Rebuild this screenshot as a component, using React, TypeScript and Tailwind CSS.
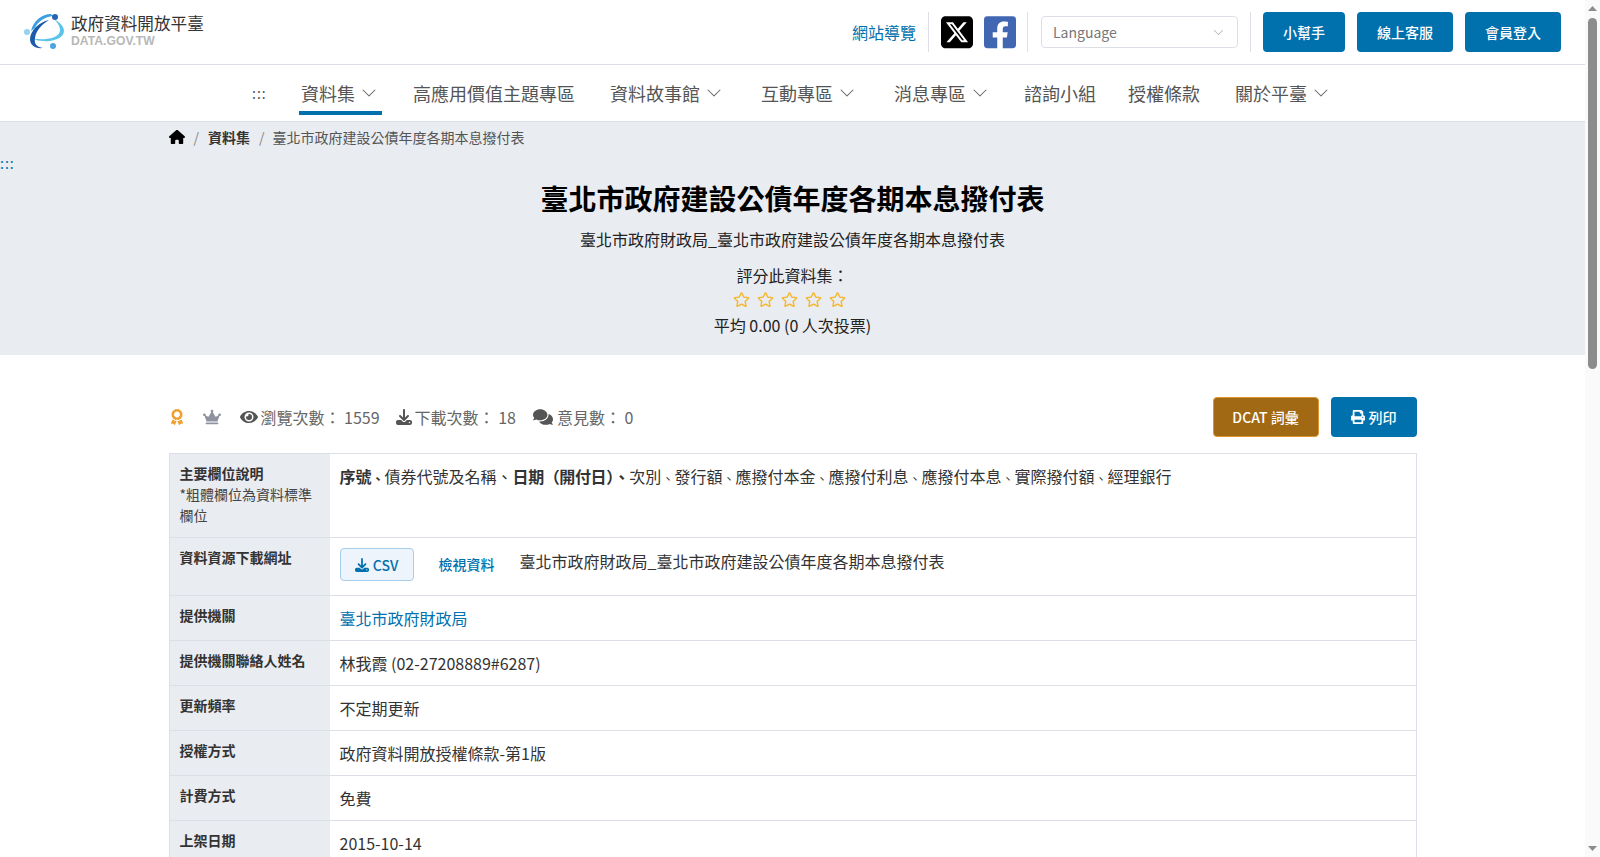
import { BsChevronDown } from 'react-icons/bs';
import { FaAward, FaComments, FaCrown, FaEye, FaFacebookSquare, FaPrint, FaRegStar } from 'react-icons/fa';
import { FaDownload, FaHouse, FaSquareXTwitter } from 'react-icons/fa6';

const NAV_ITEMS = [
  { label: '資料集', chevron: true, active: true, gap: 'ml-[35px]' },
  { label: '高應用價值主題專區', gap: 'ml-[34px]' },
  { label: '資料故事館', chevron: true, gap: 'ml-[35px]' },
  { label: '互動專區', chevron: true, gap: 'ml-[37px]' },
  { label: '消息專區', chevron: true, gap: 'ml-[37px]' },
  { label: '諮詢小組', gap: 'ml-[34px]' },
  { label: '授權條款', gap: 'ml-[32px]' },
  { label: '關於平臺', chevron: true, gap: 'ml-[35px]' },
];

const SIMPLE_ROWS = [
  { label: '提供機關聯絡人姓名', value: '林我霞 (02-27208889#6287)' },
  { label: '更新頻率', value: '不定期更新' },
  { label: '授權方式', value: '政府資料開放授權條款-第1版' },
  { label: '計費方式', value: '免費' },
  { label: '上架日期', value: '2015-10-14' },
];

const PLAIN_FIELDS = ['次別', '發行額', '應撥付本金', '應撥付利息', '應撥付本息', '實際撥付額'];

function Logo() {
  return (
    <svg viewBox="0 0 42 38" className="w-[42px] h-[38px] shrink-0">
      <path d="M8 18C10 8 19 1 28 1l2 2C22 4 15 8 12 15Z" fill="#3b9fe0" />
      <path d="M26 7C16 9 7 18 7 26c0 6 5 10 13 9-6-1-9-4-8-9 0-7 6-14 14-19Z" fill="#1c5bab" />
      <path d="M31 6c7 4 10 8 10 12 0 7-11 11-21 10-4 0-7-1-9-2 4 0 8 .5 12 0 9-1 14-4 14-9 0-4-3-8-6-11Z" fill="#5cc3ea" />
      <circle cx="32" cy="4" r="3" fill="#2a63b4" />
      <circle cx="4" cy="19" r="3" fill="#8fd3f0" />
      <circle cx="30" cy="33" r="3" fill="#4aa5e0" />
    </svg>
  );
}

function Divider() {
  return <span className="block w-px h-[40px] bg-[#dcdfe6] shrink-0" />;
}

function BlueButton({ label }: { label: string }) {
  return (
    <button type="button" className="h-10 px-5 rounded bg-[#0071ad] text-white text-sm font-medium">
      {label}
    </button>
  );
}

// the source page renders its enumeration mark tighter than a full em
function Mark() {
  return <span className="text-[13px]">、</span>;
}

function Row({ label, children }: { label: React.ReactNode; children: React.ReactNode }) {
  return (
    <div className="flex border-b border-[#dcdfe6]">
      <div className="w-[160px] shrink-0 bg-[#e9ecf0] px-[10px] pt-[9px] pb-[11px] text-sm leading-[21px] text-[#333]">{label}</div>
      <div className="flex-1 px-[10px] py-[10px] text-base leading-6 text-[#333] min-w-0">{children}</div>
    </div>
  );
}

function Scrollbar() {
  return (
    <div className="w-[15px] shrink-0 bg-[#fafafa] flex flex-col items-center">
      <svg viewBox="0 0 9 5" className="w-[9px] h-[5px] mt-[6px] shrink-0">
        <path d="M4.5 0 9 5H0Z" fill="#8c8c8c" />
      </svg>
      <div className="w-[9px] h-[351px] mt-[7px] rounded-full bg-[#8c8c8c]" />
      <svg viewBox="0 0 9 5" className="w-[9px] h-[5px] mt-auto mb-[6px] shrink-0">
        <path d="M0 0H9L4.5 5Z" fill="#8c8c8c" />
      </svg>
    </div>
  );
}

export default function App() {
  return (
    <div className="h-screen flex overflow-hidden bg-white text-[#222] [font-family:'Noto_Sans_CJK_TC','Noto_Sans',sans-serif]">
      <div className="flex-1 min-w-0">
        <header className="h-[65px] border-b border-[#dcdfe6] flex items-center justify-between pl-[23px] pr-[24px]">
          <div className="flex items-center gap-[6px]">
            <Logo />
            <div className="flex flex-col -mt-[4px]">
              <span className="text-[16.6px] leading-[23px] text-[#333]">政府資料開放平臺</span>
              <span className="text-[12.2px] leading-[13px] font-bold text-[#b8b8b8] [font-family:'Liberation_Sans',sans-serif]">DATA.GOV.TW</span>
            </div>
          </div>
          <div className="flex items-center">
            <a className="text-base text-[#0071ad] mr-[12px]">網站導覽</a>
            <Divider />
            <FaSquareXTwitter className="w-[32px] h-[36.6px] ml-[12px] text-black" />
            <FaFacebookSquare className="w-[32px] h-[36.6px] ml-[11px] text-[#4267b2]" />
            <span className="ml-[11px]"><Divider /></span>
            <div className="ml-[13px] w-[197px] h-[32px] rounded border border-[#dcdfe6] flex items-center justify-between pl-[11px] pr-[13px] text-sm text-[#777]">
              Language
              <BsChevronDown className="w-[11px] h-[11px] text-[#aaa]" />
            </div>
            <span className="ml-[12px]"><Divider /></span>
            <div className="ml-[12px] flex gap-3">
              <BlueButton label="小幫手" />
              <BlueButton label="線上客服" />
              <BlueButton label="會員登入" />
            </div>
          </div>
        </header>

        <nav className="h-[57px] pr-[2px] flex items-center justify-center text-lg text-[#555] border-b border-[#dcdfe6]">
          <span className="w-[14px] text-sm tracking-[1px]">:::</span>
          {NAV_ITEMS.map((item) => (
            <div key={item.label} className={`relative flex items-center gap-[6px] ${item.gap}`}>
              {item.label}
              {item.chevron && <BsChevronDown className="w-4 h-4 mr-[2px] text-[#666]" />}
              {item.active && <span className="absolute left-[-2px] right-[-3px] top-[32px] h-1 bg-[#0071ad]" />}
            </div>
          ))}
        </nav>

        <section className="h-[233px] bg-[#e9ecf0]">
          <div className="max-w-[1248px] mx-auto flex items-center h-[29px] text-sm text-[#555]">
            <FaHouse className="w-4 h-4 text-black" />
            <span className="ml-[9px] mr-[9px] text-[#888]">/</span>
            <span className="font-bold text-[#333]">資料集</span>
            <span className="ml-[9px] mr-[8px] text-[#888]">/</span>
            臺北市政府建設公債年度各期本息撥付表
          </div>
          <div className="mt-[3px] text-sm leading-[18px] tracking-[1px] text-[#0071ad]">:::</div>
          <div className="flex flex-col items-center">
            <h1 className="mt-[5px] text-[28px] leading-[42px] font-bold text-black">臺北市政府建設公債年度各期本息撥付表</h1>
            <p className="mt-[8px] text-base leading-6 text-[#222]">臺北市政府財政局_臺北市政府建設公債年度各期本息撥付表</p>
            <p className="mt-[12px] text-base leading-6 text-[#222]">評分此資料集：</p>
            <div className="flex gap-[7px] h-[24px] items-center pr-[7px]">
              {[0, 1, 2, 3, 4].map((i) => (
                <FaRegStar key={i} className="w-[17px] h-[17px] text-[#f4b92f]" />
              ))}
            </div>
            <p className="mt-[2px] text-base leading-6 text-[#222]">平均 0.00 (0 人次投票)</p>
          </div>
        </section>

        <main className="max-w-[1248px] mx-auto">
          <div className="mt-[42px] h-[40px] flex items-center justify-between text-base text-[#666]">
            <div className="flex items-center">
              <FaAward className="w-4 h-4 text-[#f0a030]" />
              <FaCrown className="w-[18px] h-[18px] ml-[18px] text-[#8f93a0]" />
              <FaEye className="w-[18px] h-[18px] ml-[19px] text-[#555]" />
              <span className="ml-[3px]">瀏覽次數： 1559</span>
              <FaDownload className="w-4 h-4 ml-[16px] text-[#555]" />
              <span className="ml-[3px]">下載次數： 18</span>
              <FaComments className="w-5 h-5 ml-[17px] text-[#555]" />
              <span className="ml-[4px]">意見數： 0</span>
            </div>
            <div className="flex gap-3">
              <button type="button" className="h-10 w-[106px] rounded border border-[#e0962f] bg-[#a16913] text-white text-sm font-medium">DCAT 詞彙</button>
              <button type="button" className="h-10 w-[86px] rounded bg-[#0071ad] text-white text-sm font-medium flex items-center justify-center gap-1">
                <FaPrint className="w-[14px] h-[14px]" />
                列印
              </button>
            </div>
          </div>

          <div className="mt-4 border border-b-0 border-[#dcdfe6]">
            <Row
              label={
                <>
                  <b className="font-bold">主要欄位說明</b>
                  <br />
                  <span className="text-[#444]">*粗體欄位為資料標準欄位</span>
                </>
              }
            >
              <b className="font-bold">序號<Mark /></b>債券代號及名稱、<b className="font-bold tracking-[-0.4px]">日期（開付日）、</b>
              {PLAIN_FIELDS.map((field) => (
                <span key={field}>{field}<Mark /></span>
              ))}
              經理銀行
            </Row>
            <Row label={<b className="font-bold">資料資源下載網址</b>}>
              <div className="flex items-start h-[37px]">
                <button type="button" className="h-[33px] w-[74px] rounded border border-[#a6cdea] bg-[#edf4fc] text-sm font-medium text-[#0071ad] flex items-center justify-center gap-1">
                  <FaDownload className="w-[14px] h-[14px]" />
                  CSV
                </button>
                <a className="ml-[25px] mt-[6px] text-sm leading-[21px] text-[#0071ad] font-medium">檢視資料</a>
                <span className="ml-[25px] mt-[1px]">臺北市政府財政局_臺北市政府建設公債年度各期本息撥付表</span>
              </div>
            </Row>
            <Row label={<b className="font-bold">提供機關</b>}>
              <a className="text-[#0071ad]">臺北市政府財政局</a>
            </Row>
            {SIMPLE_ROWS.map((row) => (
              <Row key={row.label} label={<b className="font-bold">{row.label}</b>}>
                {row.value}
              </Row>
            ))}
          </div>
        </main>
      </div>
      <Scrollbar />
    </div>
  );
}
